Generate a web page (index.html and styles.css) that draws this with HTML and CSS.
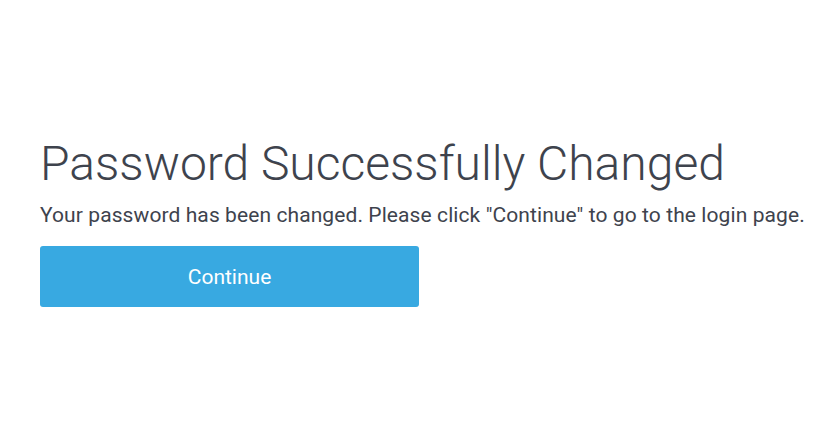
FILE: index.html
```html
<!DOCTYPE html>
<html lang="en">
<head>
    <meta charset="UTF-8">
    <meta name="viewport" content="width=device-width, initial-scale=1.0">
    <title>Password Successfully Changed</title>
    <link rel="stylesheet" href="styles.css">
</head>
<body>
    <div class="box">
        <h1>Password Successfully Changed</h1>
        <p>Your password has been changed. Please click "Continue" to go to the login page.</p>
        <button class="continue">Continue</button>
    </div>
</body>
</html>
```

FILE: styles.css
```css
body {
    margin: 0;
    background-color: #fff;
    font-family: Roboto, "Liberation Sans", sans-serif;
    color: #3e434d;
}

.box {
    padding: 136px 0 0 40px;
}

.box h1 {
    margin: 0;
    font-size: 48px;
    font-weight: 300;
    line-height: 56px;
}

.box p {
    margin: 10px 0 0 0;
    font-size: 21px;
    line-height: 26px;
    letter-spacing: 0.09px;
}

button.continue {
    display: block;
    margin-top: 18px;
    width: 379px;
    height: 61px;
    border: none;
    border-radius: 3px;
    background-color: #38a9e1;
    color: #fff;
    font-family: Roboto, "Liberation Sans", sans-serif;
    font-size: 21px;
}
```
